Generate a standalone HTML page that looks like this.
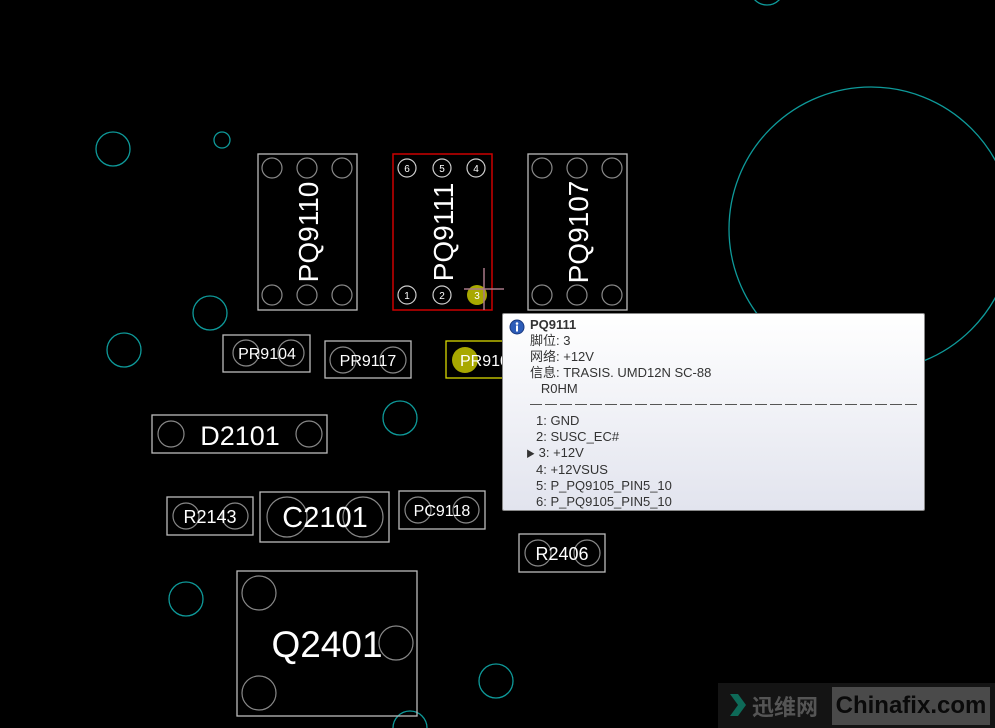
<!DOCTYPE html>
<html><head><meta charset="utf-8"><style>
html,body{margin:0;padding:0;background:#000;width:995px;height:728px;overflow:hidden;}
svg{position:absolute;left:0;top:0}
.tt{position:absolute;left:502px;top:313px;width:421px;height:196px;border:1px solid #888;border-radius:2px;background:linear-gradient(#ffffff,#e2e4ee);font-family:"Liberation Sans","Noto Sans CJK SC",sans-serif;font-size:13px;color:#333;line-height:16px;}
.tt .in{position:absolute;left:27px;top:3px}
.dash{width:389px;height:1px;margin:7px 0 8px;background:repeating-linear-gradient(90deg,#555 0 12px,transparent 12px 15px)}
.wm{position:absolute;left:718px;top:683px;width:277px;height:45px;background:#141414}
</style></head><body>
<svg width="995" height="728" font-family="Liberation Sans, sans-serif">
<g fill="none" stroke="#0e9a9a" stroke-width="1.3">
<circle cx="113" cy="149" r="17"/><circle cx="222" cy="140" r="8"/><circle cx="210" cy="313" r="17"/>
<circle cx="124" cy="350" r="17"/><circle cx="400" cy="418" r="17"/><circle cx="186" cy="599" r="17"/>
<circle cx="496" cy="681" r="17"/><circle cx="410" cy="728" r="17"/><circle cx="767" cy="-12" r="17"/>
<circle cx="871" cy="229" r="142"/>
</g>
<g fill="none" stroke="#bbb" stroke-width="1.3">
<rect x="258" y="154" width="99" height="156"/><rect x="528" y="154" width="99" height="156"/>
<rect x="223" y="335" width="87" height="37"/><rect x="325" y="341" width="86" height="37"/>
<rect x="152" y="415" width="175" height="38"/><rect x="167" y="497" width="86" height="38"/>
<rect x="260" y="492" width="129" height="50"/><rect x="399" y="491" width="86" height="38"/>
<rect x="519" y="534" width="86" height="38"/><rect x="237" y="571" width="180" height="145"/>
</g>
<g fill="none" stroke="#888" stroke-width="1.2">
<circle cx="272" cy="168" r="10"/><circle cx="307" cy="168" r="10"/><circle cx="342" cy="168" r="10"/>
<circle cx="272" cy="295" r="10"/><circle cx="307" cy="295" r="10"/><circle cx="342" cy="295" r="10"/>
<circle cx="542" cy="168" r="10"/><circle cx="577" cy="168" r="10"/><circle cx="612" cy="168" r="10"/>
<circle cx="542" cy="295" r="10"/><circle cx="577" cy="295" r="10"/><circle cx="612" cy="295" r="10"/>
<circle cx="246" cy="353" r="13"/><circle cx="291" cy="353" r="13"/>
<circle cx="343" cy="360" r="13"/><circle cx="393" cy="360" r="13"/>
<circle cx="171" cy="434" r="13"/><circle cx="309" cy="434" r="13"/>
<circle cx="186" cy="516" r="13"/><circle cx="235" cy="516" r="13"/>
<circle cx="287" cy="517" r="20"/><circle cx="363" cy="517" r="20"/>
<circle cx="418" cy="510" r="13"/><circle cx="466" cy="510" r="13"/>
<circle cx="538" cy="553" r="13"/><circle cx="587" cy="553" r="13"/>
<circle cx="259" cy="593" r="17"/><circle cx="259" cy="693" r="17"/><circle cx="396" cy="643" r="17"/>
</g>
<rect x="393" y="154" width="99" height="156" fill="none" stroke="#c00" stroke-width="1.5"/>
<g fill="none" stroke="#ccc" stroke-width="1.2">
<circle cx="407" cy="168" r="9"/><circle cx="442" cy="168" r="9"/><circle cx="476" cy="168" r="9"/>
<circle cx="407" cy="295" r="9"/><circle cx="442" cy="295" r="9"/>
</g>
<circle cx="477" cy="295" r="10" fill="#a8a800"/>
<g fill="#fff" font-size="10" text-anchor="middle">
<text x="407" y="172">6</text><text x="442" y="172">5</text><text x="476" y="172">4</text>
<text x="407" y="299">1</text><text x="442" y="299">2</text><text x="477" y="299">3</text>
</g>
<g stroke="#a87888" stroke-width="1.5"><line x1="484" y1="268" x2="484" y2="310"/><line x1="464" y1="289" x2="504" y2="289"/></g>
<rect x="446" y="341" width="70" height="37" fill="none" stroke="#d8d800" stroke-width="1.3"/>
<circle cx="465" cy="360" r="13" fill="#a8a800"/>
<g fill="#fff">
<text transform="translate(318,232) rotate(-90)" font-size="28" text-anchor="middle">PQ9110</text>
<text transform="translate(453,232) rotate(-90)" font-size="28" text-anchor="middle">PQ9111</text>
<text transform="translate(588,232) rotate(-90)" font-size="28" text-anchor="middle">PQ9107</text>
<text x="267" y="359" font-size="16" text-anchor="middle">PR9104</text>
<text x="368" y="366" font-size="16" text-anchor="middle">PR9117</text>
<text x="460" y="366" font-size="16">PR910</text>
<text x="240" y="445" font-size="27" text-anchor="middle">D2101</text>
<text x="210" y="523" font-size="18" text-anchor="middle">R2143</text>
<text x="325" y="527" font-size="29" text-anchor="middle">C2101</text>
<text x="442" y="516" font-size="16" text-anchor="middle">PC9118</text>
<text x="562" y="560" font-size="18" text-anchor="middle">R2406</text>
<text x="327" y="657" font-size="37" text-anchor="middle">Q2401</text>
</g>
</svg>
<div class="tt">
<svg width="16" height="16" style="left:6px;top:5px"><circle cx="8" cy="8" r="7" fill="#2c5cb8" stroke="#1a3a80"/><circle cx="8" cy="4.5" r="1.3" fill="#fff"/><rect x="7" y="6.5" width="2" height="6" fill="#fff"/></svg>
<div class="in">
<b>PQ9111</b><br>脚位: 3<br>网络: +12V<br>信息: TRASIS. UMD12N SC-88<br>&nbsp;&nbsp;&nbsp;R0HM
<div class="dash"></div>
<div style="padding-left:6px">1: GND<br>2: SUSC_EC#<br><span style="margin-left:-10px;font-size:9px">▶</span> 3: +12V<br>4: +12VSUS<br>5: P_PQ9105_PIN5_10<br>6: P_PQ9105_PIN5_10</div>
</div></div>
<div class="wm">
<svg width="20" height="26" style="left:10px;top:9px"><path d="M2 2 L10 2 L18 13 L10 24 L2 24 L10 13Z" fill="#0e6a58"/></svg>
<div style="position:absolute;left:34px;top:7px;font:bold 22px 'Noto Sans CJK SC',sans-serif;color:#555">迅维网</div>
<div style="position:absolute;left:114px;top:4px;width:158px;height:38px;background:#4a4a4a;font:bold 24px 'Liberation Sans',sans-serif;color:#0a0a0a;line-height:38px;text-align:center">Chinafix.com</div>
</div>
</body></html>
